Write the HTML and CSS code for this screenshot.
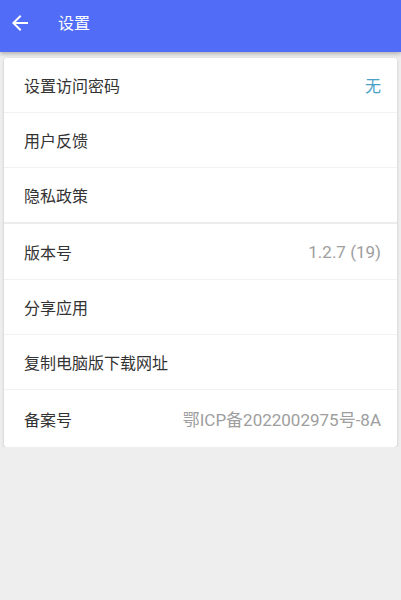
FILE: index.html
```html
<!DOCTYPE html>
<html lang="zh-CN">
<head>
  <meta charset="UTF-8" />
  <meta name="viewport" content="width=device-width, initial-scale=1.0" />
  <title>设置</title>
  <link rel="stylesheet" href="styles.css">
</head>
<body>
  <header class="toolbar">
    <button class="back" aria-label="返回">
      <svg width="24" height="24" viewBox="0 0 24 24">
        <path d="M20 11H7.83l5.59-5.59L12 4l-8 8 8 8 1.41-1.41L7.83 13H20v-2z" fill="#fff"/>
      </svg>
    </button>
    <h1>设置</h1>
  </header>

  <div class="card">
    <div class="row"><span class="label">设置访问密码</span><span class="value accent">无</span></div>
    <div class="row"><span class="label">用户反馈</span></div>
    <div class="row group-end"><span class="label">隐私政策</span></div>
    <div class="row group-start"><span class="label">版本号</span><span class="value">1.2.7 (19)</span></div>
    <div class="row"><span class="label">分享应用</span></div>
    <div class="row"><span class="label">复制电脑版下载网址</span></div>
    <div class="row last"><span class="label">备案号</span><span class="value">鄂ICP备2022002975号-8A</span></div>
  </div>
</body>
</html>
```

FILE: styles.css
```css
body {
  margin: 0;
  padding: 0;
  background-color: #eeeeee;
  font-family: Roboto, "Noto Sans CJK SC", sans-serif;
  color: #333;
}
.toolbar {
  display: flex;
  align-items: center;
  height: 52px;
  padding-left: 8px;
  background-color: #516cf6;
  box-shadow: 0 2px 4px rgba(0, 0, 0, 0.25);
}
.back {
  display: flex;
  align-items: center;
  padding: 0;
  background: none;
  border: none;
  width: 24px;
  height: 24px;
  margin-top: -6px;
}
.toolbar h1 {
  margin: -8px 0 0 26px;
  font-size: 16px;
  font-weight: normal;
  color: #fff;
}
.card {
  margin: 6px 4px 0;
  background-color: #fff;
  border-radius: 3px;
  box-shadow: 0 1px 3px rgba(0, 0, 0, 0.18);
}
.row {
  display: flex;
  align-items: center;
  justify-content: space-between;
  height: 54px;
  padding: 0 16px 0 20px;
  border-bottom: 1px solid #f2f2f2;
  font-size: 16px;
}
.row.group-end {
  border-bottom: 2px solid #ececec;
}
.row.group-start {
  height: 55px;
}
.row.last {
  height: 57px;
  border-bottom: none;
}
.value {
  color: #9e9e9e;
  font-size: 17px;
}
.value.accent {
  color: #4a9fc4;
  font-size: 16px;
}
```
